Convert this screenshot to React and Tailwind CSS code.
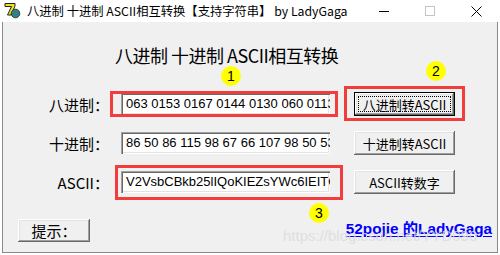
import React from "react";

const cjk = { fontFamily: '"Noto Sans CJK SC", "Liberation Sans", sans-serif' };
const sans = { fontFamily: '"Liberation Sans", "Noto Sans CJK SC", sans-serif' };

function Icon() {
  return (
    <svg width="17" height="17" viewBox="0 0 17 17" className="shrink-0">
      <path d="M1 1.5 L11 1.5 L11 4 L7 13 L3.5 13 L7.5 4.5 L1 4.5 Z" fill="#f2e41c" stroke="#222" strokeWidth="1" />
      <circle cx="11.5" cy="11.5" r="4.3" fill="#2e8b57" stroke="#222" strokeWidth="0.8" />
      <path d="M8.5 10 Q11 9 14.5 11 M9 13 Q12 12.5 15 13.5" stroke="#3a6fd8" strokeWidth="1.2" fill="none" />
    </svg>
  );
}

function Input({ children }) {
  return (
    <div
      className="w-[209px] h-[22px] bg-white overflow-hidden whitespace-nowrap flex items-center pl-[5px] text-[13px] text-black shadow-[inset_1px_1px_#a0a0a0,inset_2px_2px_#696969,inset_-1px_-1px_#ffffff,inset_-2px_-2px_#e3e3e3]"
      style={sans}
    >
      {children}
    </div>
  );
}

function Btn({ children, def = false, className = "" }) {
  if (def) {
    return (
      <div className={"border border-black bg-[#f0f0f0] " + className}>
        <div className="w-full h-full shadow-[inset_-1px_-1px_#696969,inset_1px_1px_#ffffff,inset_-2px_-2px_#a0a0a0,inset_2px_2px_#e3e3e3] p-[3px]">
          <div className="w-full h-full border border-dotted border-black flex items-center justify-center whitespace-nowrap text-[13px] leading-none text-black" style={cjk}>
            {children}
          </div>
        </div>
      </div>
    );
  }
  return (
    <div
      className={"bg-[#f0f0f0] flex items-center justify-center whitespace-nowrap leading-none text-black shadow-[inset_-1px_-1px_#696969,inset_1px_1px_#ffffff,inset_-2px_-2px_#a0a0a0,inset_2px_2px_#e3e3e3] " + className}
      style={cjk}
    >
      {children}
    </div>
  );
}

function Row({ label, value, button, def, className = "" }) {
  return (
    <div className={"flex items-center h-[24px] " + className}>
      <div className="w-[118px] pr-[12px] text-right text-[15px] text-black leading-none whitespace-nowrap" style={cjk}>
        {label}
      </div>
      <Input>{value}</Input>
      <Btn def={def} className="ml-[24px] w-[101px] h-[24px] text-[13px]">{button}</Btn>
    </div>
  );
}

function Circle({ n, className }) {
  return (
    <div
      className={"absolute w-[20px] h-[20px] rounded-full bg-[#ffff00] flex items-center justify-center text-[14px] text-black " + className}
      style={sans}
    >
      {n}
    </div>
  );
}

export default function App() {
  return (
    <div className="relative w-[500px] h-[255px] bg-white overflow-hidden">
      {/* Title bar */}
      <div className="h-[22px] flex items-center bg-white">
        <div className="ml-[4px] mt-[-1px]">
          <Icon />
        </div>
        <div className="ml-[6px] text-[12.3px] text-black whitespace-nowrap leading-none" style={cjk}>
          八进制 十进制 ASCII相互转换【支持字符串】 by LadyGaga
        </div>
        <div className="ml-auto flex items-center h-full">
          <div className="w-[10px] h-px bg-black mr-[36px]" />
          <div className="w-[10px] h-[10px] border border-[#c4c4c4] mr-[36px]" />
          <svg width="11" height="11" viewBox="0 0 11 11" className="mr-[18px]">
            <path d="M0.5 0.5 L10.5 10.5 M10.5 0.5 L0.5 10.5" stroke="#000" strokeWidth="1" />
          </svg>
        </div>
      </div>

      {/* Window body */}
      <div className="ml-[2px] w-[496px] h-[231px] bg-[#f0f0f0] border-l border-r border-b border-[#8a8a8a] flex flex-col">
        <div className="mt-[21px] h-[24px] leading-[24px] ml-[112px] text-[18px] tracking-[-0.5px] text-black whitespace-nowrap" style={cjk}>
          八进制 十进制 ASCII相互转换
        </div>

        <Row className="mt-[25px]" label="八进制：" value="063 0153 0167 0144 0130 060 0113 0152 0142 0103" button="八进制转ASCII" def />
        <Row className="mt-[15px]" label="十进制：" value="86 50 86 115 98 67 66 107 98 50 53 108 73 81" button="十进制转ASCII" />
        <Row className="mt-[15px]" label="ASCII：" value="V2VsbCBkb25lIQoKIEZsYWc6IEITQ1RGe" button="ASCII转数字" />

        <div className="mt-[25px] flex items-center h-[23px]">
          <Btn className="ml-[15px] w-[72px] h-[23px] text-[15px]">提示：</Btn>
          <div
            className="ml-auto mr-[5px] mt-[-4px] text-[15.3px] font-bold text-[#0000ff] underline underline-offset-2 whitespace-nowrap leading-none"
            style={sans}
          >
            52pojie 的LadyGaga
          </div>
        </div>
      </div>

      {/* Watermark */}
      <div
        className="absolute left-[283px] top-[228px] text-[15px] text-[#dcdcdc] opacity-80 whitespace-nowrap leading-none pointer-events-none"
        style={sans}
      >
        https://blog.csdn.net/YYD090
      </div>

      {/* Annotations */}
      <div className="absolute left-[110px] top-[91px] w-[228px] h-[26px] border-[3px] border-[#f23d3d]" />
      <div className="absolute left-[344px] top-[86px] w-[121px] h-[35px] border-[3px] border-[#f23d3d]" />
      <div className="absolute left-[115px] top-[165px] w-[228px] h-[35px] border-[3px] border-[#f23d3d]" />
      <Circle n="1" className="left-[221px] top-[66px]" />
      <Circle n="2" className="left-[426px] top-[61px]" />
      <Circle n="3" className="left-[309px] top-[203px]" />
    </div>
  );
}
